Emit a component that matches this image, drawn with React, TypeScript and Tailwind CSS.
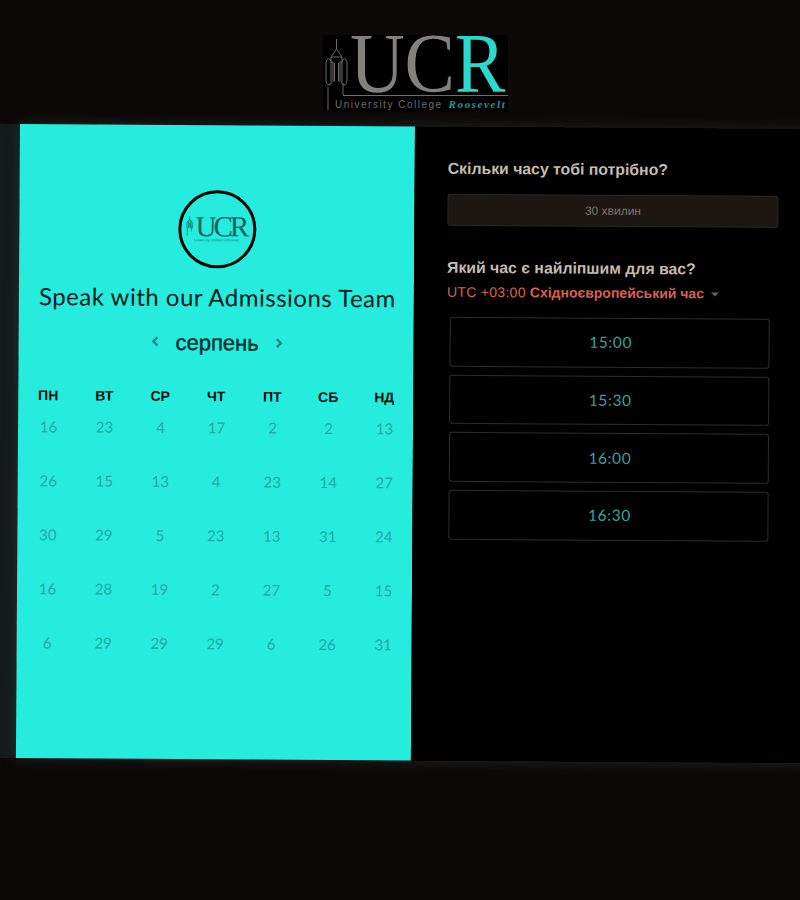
import React from 'react';

const days = [
  [16, 23, 4, 17, 2, 2, 13],
  [26, 15, 13, 4, 23, 14, 27],
  [30, 29, 5, 23, 13, 31, 24],
  [16, 28, 19, 2, 27, 5, 15],
  [6, 29, 29, 29, 6, 26, 31],
];
const weekdays = ['ПН', 'ВТ', 'СР', 'ЧТ', 'ПТ', 'СБ', 'НД'];
const slots = ['15:00', '15:30', '16:00', '16:30'];

const Tower: React.FC<{ className?: string; stroke: string; strokeWidth?: number }> = ({ className, stroke, strokeWidth = 1 }) => (
  <svg viewBox="0 0 28 77" className={className} fill="none" stroke={stroke} strokeWidth={strokeWidth}>
    <path d="M13.5 4 V14 L8 22 V28 M13.5 14 L19 22 V28 M8 22 H19" />
    <path d="M8 26 Q5 21 3 27 V46 Q4 52 8 49 V29 Q8 26 10 27 V47" />
    <path d="M19 26 Q22 21 24 27 V46 Q23 52 19 49 V29 Q19 26 17 27 V47" />
    <path d="M11.5 28 V46 M15.5 28 V46 M5 52 V75 M20 48 V60" />
  </svg>
);

const App: React.FC = () => {
  return (
    <div className="w-[800px] h-[900px] overflow-hidden bg-[#0c0908] font-['Liberation_Sans',sans-serif]">
      <header className="h-[124px] pt-[35px] flex justify-center">
        <div className="relative w-[185px] h-[77px] bg-black ml-[31px]">
          <Tower className="absolute left-0 top-0 w-[28px] h-[77px]" stroke="#6f6b68" />
          <div className="absolute left-[27px] top-[1px] font-['Liberation_Serif',serif] text-[84px] leading-[56px] text-[#84817d] whitespace-nowrap origin-left scale-x-[0.9]">
            UC<span className="text-[#2bd8cb]">R</span>
          </div>
          <div className="absolute left-[20px] right-0 top-[60px] h-px bg-[#6f6c69]" />
          <div className="absolute left-[12px] top-[62px] flex items-baseline text-[10px] leading-[14px] tracking-[1.5px] text-[#6f6d6a] whitespace-nowrap">
            University College
            <span className="ml-[6px] font-['Liberation_Serif',serif] italic font-bold text-[11px] tracking-[1.6px] text-[#1c9c95]">Roosevelt</span>
          </div>
        </div>
      </header>

      <main className="w-[830px] h-[634px] ml-[20px] flex origin-top-left rotate-[0.37deg] shadow-[0_0_14px_rgba(60,60,60,0.55),-20px_0_0_#151a1a]">
        <section className="w-[395px] shrink-0 bg-[#25ecdd] pt-[65px] pl-[3px] pr-[1px] flex flex-col items-center">
          <div className="w-[78px] h-[78px] ml-[-2px] rounded-full border-[3px] border-black flex flex-col items-center justify-center">
            <div className="flex items-end font-['Liberation_Serif',serif] text-[29px] leading-[19px] tracking-[-3px] text-[#07605f] mt-[-1px] mr-[2px]">
              <Tower className="w-[9px] h-[21px] mr-[1px]" stroke="#0f8782" strokeWidth={3} />
              UCR
            </div>
            <div className="mt-[2px] text-[3.5px] leading-[5px] text-[#0f8782] whitespace-nowrap">University College Roosevelt</div>
          </div>
          <h1 className="mt-[13px] font-['Lato',sans-serif] text-[24px] leading-[32px] tracking-[0.5px] text-[#04201f] whitespace-nowrap">
            Speak with our Admissions Team
          </h1>
          <div className="mt-[14px] flex items-center h-[32px] text-[#0b2f2e]">
            <svg viewBox="0 0 10 12" className="w-[9px] h-[11px] mt-[-3px]" fill="none" stroke="#1c8a84" strokeWidth="2.6">
              <path d="M7.5 1.5 L3 6 L7.5 10.5" />
            </svg>
            <span className="mx-[16px] text-[22px] leading-[28px] [-webkit-text-stroke:0.4px_#0b2f2e]">серпень</span>
            <svg viewBox="0 0 10 12" className="w-[9px] h-[11px] mt-[-1px]" fill="none" stroke="#1c8a84" strokeWidth="2.6">
              <path d="M2.5 1.5 L7 6 L2.5 10.5" />
            </svg>
          </div>
          <div className="mt-[27px] w-[392px] grid grid-cols-7">
            {weekdays.map(d => (
              <div key={d} className="h-[20px] pr-[1px] flex items-center justify-center text-[14px] font-bold text-[#020f0f]">{d}</div>
            ))}
          </div>
          <div className="mt-[10px] w-[392px] grid grid-cols-7">
            {days.flat().map((d, i) => (
              <div key={i} className="h-[54px] pt-[1px] text-center font-['Lato',sans-serif] text-[15px] leading-[20px] text-[#22aaa3]">{d}</div>
            ))}
          </div>
        </section>

        <section className="flex-1 bg-black pl-[33px] pt-[31px]">
          <h2 className="text-[15.8px] leading-[22px] font-bold text-[#c4bbb0]">Скільки часу тобі потрібно?</h2>
          <div className="mt-[14px] w-[331px] h-[32px] bg-[#1c1712] border border-[#2b2722] rounded-[3px] flex items-center justify-center text-[12px] text-[#7d7568]">
            30 хвилин
          </div>
          <h2 className="mt-[31px] text-[15.8px] leading-[22px] font-bold text-[#c4bbb0]">Який час є найліпшим для вас?</h2>
          <div className="mt-[2px] flex items-center h-[22px] text-[14px] text-[#d9604f]">
            <span className="tracking-[0.3px]">UTC +03:00</span>
            <span className="ml-[4px] font-bold">Східноєвропейський час</span>
            <span className="ml-[7px] mt-[2px] w-0 h-0 border-x-[4px] border-x-transparent border-t-[4px] border-t-[#6b5f58]" />
          </div>
          <div className="mt-[14px] ml-[3px] w-[320px] flex flex-col gap-[8px]">
            {slots.map(s => (
              <div key={s} className="h-[49.7px] border border-[#2d2d2d] rounded-[3px] flex items-center justify-center font-['Lato',sans-serif] text-[15.5px] tracking-[0.6px] text-[#3aa398] pl-[2px]">
                {s}
              </div>
            ))}
          </div>
        </section>
      </main>
    </div>
  );
};

export default App;
